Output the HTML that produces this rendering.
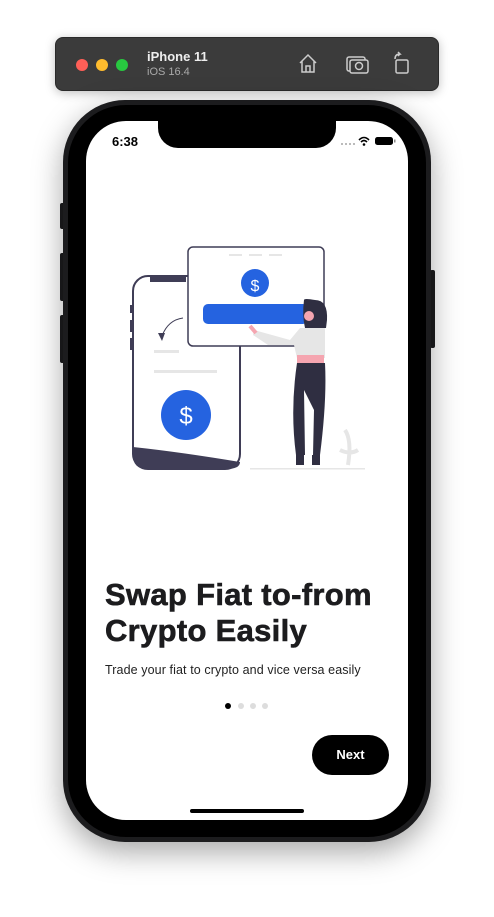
<!DOCTYPE html>
<html><head><meta charset="utf-8"><style>
*{margin:0;padding:0;box-sizing:border-box}
body{width:494px;height:917px;background:#fff;position:relative;overflow:hidden;font-family:"Liberation Sans",sans-serif}
.bar{position:absolute;left:55px;top:37px;width:384px;height:54px;background:#3b3b3b;border-radius:8px;border:1px solid #2a2a2a;box-shadow:0 2px 10px rgba(0,0,0,.25)}
.dot{position:absolute;top:21px;width:12px;height:12px;border-radius:50%}
.frame{position:absolute;left:63px;top:100px;width:368px;height:742px;border-radius:62px;background:#1c1c1e;box-shadow:0 10px 30px rgba(0,0,0,.35)}
.inner{position:absolute;left:68px;top:105px;width:358px;height:732px;border-radius:58px;background:#000}
.screen{position:absolute;left:86px;top:121px;width:322px;height:699px;border-radius:40px;background:#fff;overflow:hidden}
.notch{position:absolute;left:72px;top:0;width:178px;height:27px;background:#000;border-radius:0 0 20px 20px}
.btn{position:absolute;background:#1c1c1e;width:5px;border-radius:2px}
</style></head><body>
<div class="bar">
<div class="dot" style="left:20px;background:#fe5f57"></div>
<div class="dot" style="left:40px;background:#febc2e"></div>
<div class="dot" style="left:60px;background:#28c840"></div>
<div style="position:absolute;left:91px;top:11px;color:#eee;font-weight:bold;font-size:13px">iPhone 11</div>
<div style="position:absolute;left:91px;top:28px;color:#aaa;font-size:11px">iOS 16.4</div>
<svg style="position:absolute;left:240px;top:13px" width="130" height="26" fill="none" stroke="#ccc" stroke-width="1.5">
<path d="M4 12 L12 4 L20 12 M6 10 V21 H18 V10 M10 21 V15 H14 V21"/>
<rect x="51" y="6" width="18" height="14" rx="2"/><rect x="54" y="9" width="18" height="13" rx="2" fill="#3b3b3b"/><circle cx="63" cy="15" r="3.5"/>
<rect x="100" y="9" width="12" height="13" rx="1.5"/><path d="M99 8 Q99 3 104 3 L102 1 M104 3 L102 5"/>
</svg>
</div>
<div class="btn" style="left:60px;top:203px;height:26px"></div>
<div class="btn" style="left:60px;top:253px;height:48px"></div>
<div class="btn" style="left:60px;top:315px;height:48px"></div>
<div class="btn" style="left:430px;top:270px;height:78px"></div>
<div class="frame"></div><div class="inner"></div>
<div class="screen">
<div class="notch"></div>
<div style="position:absolute;left:26px;top:13px;font-size:13px;font-weight:bold;color:#000">6:38</div>
<div style="position:absolute;left:255px;top:22px;width:14px;border-top:2px dotted #bbb"></div>
<svg style="position:absolute;left:271px;top:14px" width="40" height="12"><path d="M2 5 Q7 0 12 5 M4 7 Q7 4 10 7" stroke="#000" stroke-width="1.6" fill="none"/><circle cx="7" cy="9.5" r="1.3"/><rect x="18" y="2" width="18" height="8" rx="2.5" fill="#000"/><rect x="37" y="4.5" width="1.5" height="3" fill="#888"/></svg>
<svg style="position:absolute;left:0;top:0" width="322" height="360">
<g transform="translate(-86,-121)">
<rect x="133" y="276" width="107" height="193" rx="15" fill="#fff" stroke="#3f3d56" stroke-width="2"/>
<path d="M150 277 h36 v5 h-36z" fill="#3f3d56"/>
<path d="M133 455 Q133 469 147 469 H226 Q240 469 240 462 Q180 452 133 447z" fill="#3f3d56"/>
<rect x="130" y="305" width="3" height="8" fill="#3f3d56"/><rect x="130" y="320" width="3" height="12" fill="#3f3d56"/><rect x="130" y="338" width="3" height="12" fill="#3f3d56"/>
<path d="M183 318 Q168 320 162 336" stroke="#3f3d56" fill="none"/><path d="M158 333 L162 341 L165 333z" fill="#3f3d56"/>
<rect x="154" y="350" width="25" height="3" fill="#e6e6e6"/><rect x="154" y="370" width="63" height="3" fill="#e6e6e6"/>
<circle cx="186" cy="415" r="25" fill="#2563e0"/>
<text x="186" y="424" font-size="24" fill="#fff" text-anchor="middle" font-family="DejaVu Sans ExtraLight, Liberation Sans">$</text>
<rect x="188" y="247" width="136" height="99" rx="5" fill="#fff" stroke="#3f3d56" stroke-width="1.5"/>
<rect x="229" y="254" width="13" height="2" fill="#e6e6e6"/><rect x="249" y="254" width="13" height="2" fill="#e6e6e6"/><rect x="269" y="254" width="13" height="2" fill="#e6e6e6"/>
<circle cx="255" cy="283" r="14" fill="#2563e0"/>
<text x="255" y="291" font-size="16" fill="#fff" text-anchor="middle" font-family="DejaVu Sans ExtraLight, Liberation Sans">$</text>
<rect x="203" y="304" width="105" height="20" rx="5" fill="#2563e0"/>
<path d="M304 300 Q304 298 315 300 Q328 300 327 320 L326 328 L305 328 Q302 315 304 300z" fill="#2f2e41"/>
<circle cx="309" cy="316" r="5" fill="#f5a5b0"/>
<path d="M254 330 L290 340 L300 328 L325 328 L325 358 L297 358 L294 345 L268 345 L253 335z" fill="#e6e6e6"/>
<rect x="297" y="355" width="27" height="8" fill="#f5a5b0"/>
<path d="M297 363 L325 363 Q327 400 320 455 L313 455 L314 410 L304 390 L305 455 L296 455 Q290 410 297 363z" fill="#2f2e41"/>
<path d="M296 455 h8 v10 h-8z M312 455 h8 v10 h-8z" fill="#2f2e41"/>
<path d="M250 326 L256 333" stroke="#f5a5b0" stroke-width="4"/>
<path d="M345 430 Q352 440 348 465 M340 450 Q350 455 358 450" stroke="#e6e6e6" stroke-width="4" fill="none"/>
<rect x="250" y="468" width="115" height="1.5" fill="#e6e6e6"/>
</g></svg>
<div style="position:absolute;left:19px;top:456px;font-size:31px;line-height:36px;font-weight:bold;color:#1c1c1e;letter-spacing:0.3px;-webkit-text-stroke:0.6px #1c1c1e">Swap Fiat to-from<br>Crypto Easily</div>
<div style="position:absolute;left:19px;top:542px;font-size:12.5px;color:#222;letter-spacing:0.1px">Trade your fiat to crypto and vice versa easily</div>
<div style="position:absolute;left:139px;top:582px;width:6px;height:6px;border-radius:50%;background:#000"></div>
<div style="position:absolute;left:152px;top:582px;width:6px;height:6px;border-radius:50%;background:#ddd"></div>
<div style="position:absolute;left:164px;top:582px;width:6px;height:6px;border-radius:50%;background:#ddd"></div>
<div style="position:absolute;left:176px;top:582px;width:6px;height:6px;border-radius:50%;background:#ddd"></div>
<div style="position:absolute;left:226px;top:614px;width:77px;height:40px;border-radius:20px;background:#000;color:#fff;font-size:13px;font-weight:bold;text-align:center;line-height:40px">Next</div>
<div style="position:absolute;left:104px;top:688px;width:114px;height:4px;border-radius:2px;background:#000"></div>
</div>
</body></html>
